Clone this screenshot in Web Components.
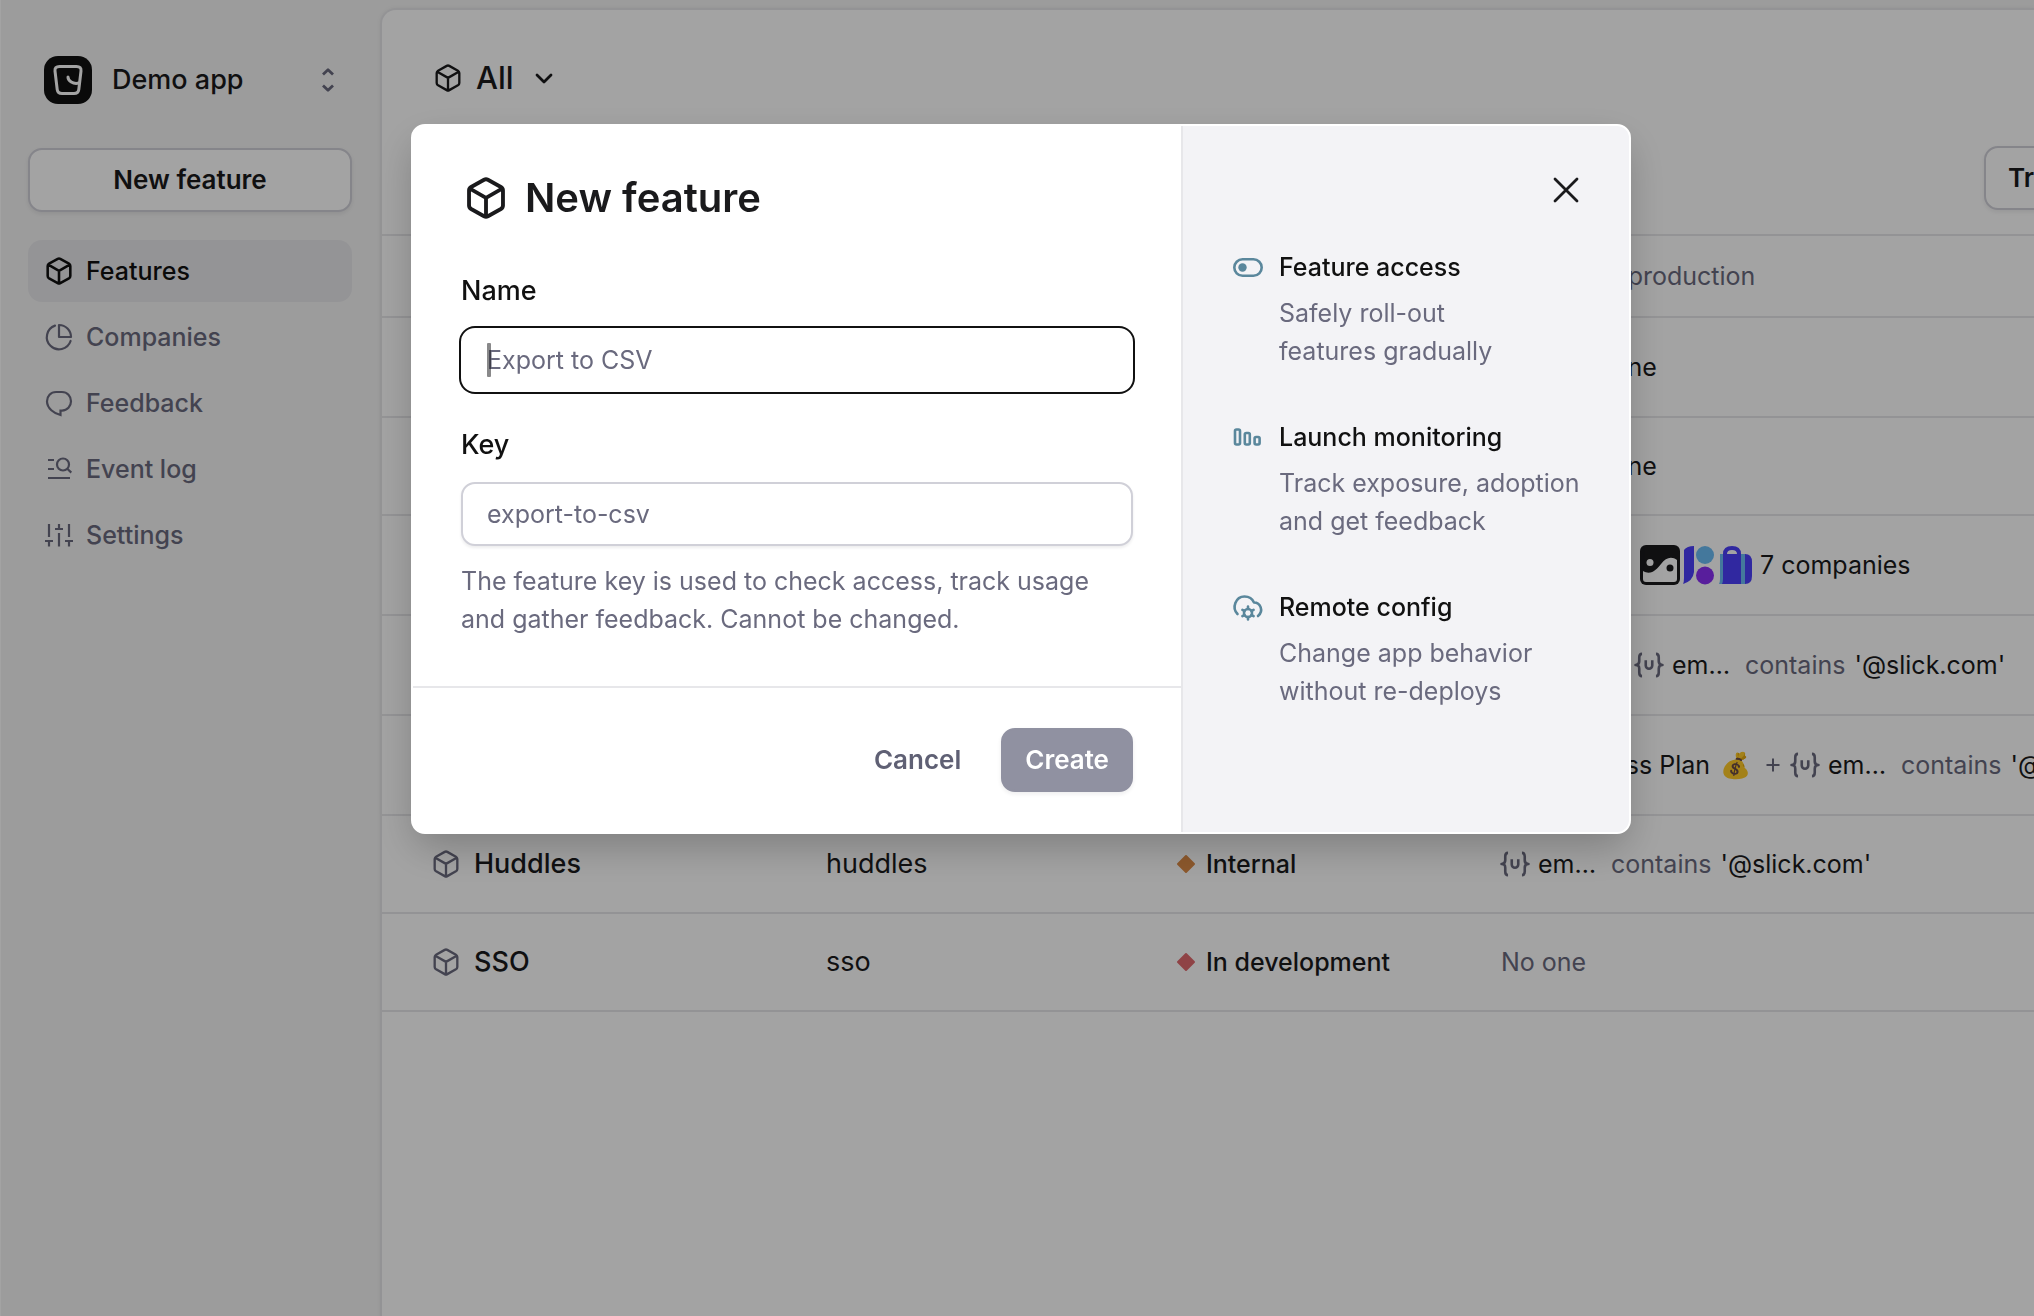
<!DOCTYPE html>
<html lang="en">
<head>
<meta charset="utf-8">
<title>Features</title>
<style>
  :root {
    --ink: #1a1a1c;
    --muted: #6a6a7e;
    --line: #e7e7ea;
    --field-line: #d0d0d8;
    --accent: #5a879c;
    --radius: 14px;
  }
  html, body { margin: 0; height: 100%; }
  body {
    overflow: hidden;
    background: #f4f4f4;
    color: var(--ink);
    font: 400 25px/38px Inter, "Liberation Sans", sans-serif;
  }
</style>
</head>
<body>
<app-shell>
  <app-sidebar slot="sidebar"></app-sidebar>
  <feature-list slot="main"></feature-list>
  <new-feature-modal slot="overlay"></new-feature-modal>
</app-shell>

<script>
const define = (name, html, setup) => {
  const template = document.createElement('template');
  template.innerHTML = '<style>*{box-sizing:border-box}button,input{font:inherit;color:inherit;margin:0}</style>' + html;
  customElements.define(name, class extends HTMLElement {
    constructor() {
      super();
      this.attachShadow({ mode: 'open' });
    }
    connectedCallback() {
      if (this.shadowRoot.childNodes.length) return;
      this.shadowRoot.append(template.content.cloneNode(true));
      if (setup) setup(this, this.shadowRoot);
    }
  });
};

const ICONS = {
  cube: ['0 0 24 24', '<path d="M10.9 1.6Q12 1 13.1 1.6L20.5 5.7Q21.7 6.4 21.7 7.7V16.3Q21.7 17.6 20.5 18.3L13.1 22.4Q12 23 10.9 22.4L3.5 18.3Q2.3 17.6 2.3 16.3V7.7Q2.3 6.4 3.5 5.7ZM2.8 6.6L12 11.9L21.2 6.6M12 11.9V22.6"/>'],
  pie: ['0 0 28 28', '<path d="M14 2V14H26A12 12 0 0 0 14 2ZM25.6 18A12.2 12.2 0 1 1 10 2.6"/>'],
  bubble: ['0 0 28 28', '<path d="M11 3H17C22.3 3 26 7.2 26 12.3S22.3 21.6 17 21.6H15.5V26C9 24.3 2 19.5 2 12.3C2 7.2 5.7 3 11 3Z" stroke-linejoin="miter"/>'],
  log: ['0 0 28 28', '<path d="M3 5H9M3 14H9M3 23H25M22.3 13.8L26.3 17.6" stroke-linecap="butt"/><circle cx="18" cy="9.5" r="6"/>'],
  sliders: ['0 0 28 28', '<path d="M4 3V16M0 20H8M4 20V25.5M14 3V8M10 8H18M14 12V25.5M24 3V16M20 20H28M24 20V25.5" stroke-linecap="butt"/>'],
  updown: ['0 0 16 28', '<path d="M3 8.5L8 3.7L13 8.5M3 19.5L8 24.3L13 19.5" stroke-linecap="butt"/>'],
  down: ['0 0 20 20', '<path d="M3 7L10 14L17 7"/>'],
  close: ['0 0 32 32', '<path d="M5 5L27 27M27 5L5 27"/>'],
  toggle: ['0 0 30 28', '<rect x="1.3" y="6.3" width="27.4" height="16.5" rx="8.25"/><circle cx="9.5" cy="14.5" r="4.2" fill="currentColor" stroke="none"/>'],
  bars: ['0 0 30 28', '<rect x="2" y="6.5" width="5" height="15" rx="1.5"/><rect x="11.8" y="10" width="5" height="11.5" rx="1.5"/><rect x="21.6" y="14" width="5" height="7.5" rx="1.5"/>'],
  cloud: ['0 0 30 28', '<path d="M4.500 21C-1.500 15 2.500 3.500 11.500 3.500C16 3.500 19.500 6 21 9.500C27.500 9.500 31 18 25 23"/><circle cx="15" cy="20" r="4"/><path d="M15 13.500V16M15 24V26.500M9.400 16.800L11.500 18M18.500 22L20.600 23.200M9.400 23.200L11.500 22M18.500 18L20.600 16.800"/>'],
  user: ['0 0 30 28', '<path d="M7.5 2C4.5 2 4.5 4 4.5 6V10C4.5 12.5 3.5 14 .5 14C3.5 14 4.5 15.5 4.5 18V22C4.5 24 4.5 26 7.5 26M22.5 2C25.5 2 25.5 4 25.5 6V10C25.5 12.5 26.5 14 29.5 14C26.5 14 25.5 15.5 25.5 18V22C25.5 24 25.5 26 22.5 26M11.5 9V14.5A3.5 3.5 0 0 0 18.5 14.5V9" stroke-linecap="butt"/>'],
  diamond: ['0 0 20 20', '<path d="M10 2L18 10L10 18L2 10Z" fill="currentColor"/>'],
  plus: ['0 0 16 28', '<path d="M1.500 14H14.500M8 7.500V20.500" stroke-linecap="butt"/>']
};
define('ui-icon', '<style>:host{display:block;flex:none}svg{display:block;overflow:visible;fill:none;stroke:currentColor;stroke-linecap:round;stroke-linejoin:round}</style>', (host, root) => {
  const [box, body] = ICONS[host.getAttribute('name')];
  const h = +(host.getAttribute('size') || 28);
  const [, , bw, bh] = box.split(' ').map(Number);
  root.innerHTML += `<svg viewBox="${box}" width="${Math.round(h * bw / bh)}" height="${h}" stroke-width="${host.getAttribute('weight') || 2}" aria-hidden="true">${body}</svg>`;
});

define('ui-button', `
  <style>
    :host { display: block; }
    button {
      width: 100%; height: 64px; padding: 0 22px; cursor: pointer; white-space: nowrap;
      font-size: 26px; font-weight: 600;
      border: 2px solid var(--field-line); border-radius: var(--radius);
      background: #fff; box-shadow: 0 2px 4px rgba(20, 20, 40, .08);
    }
    :host([kind=primary]) button { background: #9091a1; border-color: #9091a1; color: #fff; }
    :host([kind=plain]) button { background: none; border-color: transparent; box-shadow: none; color: #5f6074; }
  </style>
  <button type="button"><slot></slot></button>`);

define('app-shell', `
  <style>
    :host { display: grid; grid-template-columns: 380px minmax(0, 1fr); height: 100vh; overflow: hidden; box-shadow: inset 1px 0 #fff; }
  </style>
  <slot name="sidebar"></slot>
  <slot name="main"></slot>
  <slot name="overlay"></slot>`);

define('nav-item', `
  <style>
    a {
      display: flex; align-items: center; gap: 13px; height: 62px; padding: 0 17px;
      border-radius: var(--radius); color: var(--muted); font-weight: 500; text-decoration: none;
    }
    :host { display: block; }
    :host([current]) a { background: #e8e8eb; color: #111; }
  </style>
  <a href="#"><span><slot></slot></span></a>`, (host, root) => {
  const icon = document.createElement('ui-icon');
  icon.setAttribute('name', host.getAttribute('icon'));
  icon.setAttribute('weight', '2.2');
  root.querySelector('a').prepend(icon);
});

define('app-sidebar', `
  <style>
    :host { display: flex; flex-direction: column; gap: 28px; padding: 56px 28px 0; min-width: 0; height: 100vh; }
    .account {
      display: flex; align-items: center; gap: 20px; padding: 0 16px; margin-bottom: 16px;
      border: 0; background: none; font-size: 27px; font-weight: 500; text-align: left; height: 48px;
    }
    .account span { flex: 1; }
    .account ui-icon { color: var(--muted); }
    nav { display: flex; flex-direction: column; gap: 4px; }
    .footer { height: 62px; flex: none; margin: auto 0 -58px; border-radius: var(--radius); background: #e8e8eb; }
  </style>
  <button class="account" type="button">
    <svg width="48" height="48" viewBox="0 0 48 48" aria-hidden="true">
      <rect width="48" height="48" rx="14" fill="#111"/>
      <path d="M15.5 10.5H32.5Q37.5 10.5 37 15L34.8 33.500Q34.300 37.500 30 37.500H18Q13.700 37.500 13.200 33.500L11 15Q10.500 10.500 15.500 10.500Z" fill="none" stroke="#fff" stroke-width="3"/>
      <path d="M24 21C24 25 29 28.500 35 27" fill="none" stroke="#fff" stroke-width="3" stroke-linecap="round"/>
    </svg>
    <span>Demo app</span>
    <ui-icon name="updown" weight="2.8"></ui-icon>
  </button>
  <ui-button>New feature</ui-button>
  <nav>
    <nav-item icon="cube" current>Features</nav-item>
    <nav-item icon="pie">Companies</nav-item>
    <nav-item icon="bubble">Feedback</nav-item>
    <nav-item icon="log">Event log</nav-item>
    <nav-item icon="sliders">Settings</nav-item>
  </nav>
  <div class="footer"></div>`);

define('user-rule', `
  <style>
    :host { display: flex; align-items: center; gap: 9px; }
    ui-icon, .op { color: var(--muted); }
    .attr { width: 64px; }
  </style>
  <ui-icon name="user" size="26" weight="2.8"></ui-icon>
  <span class="attr">em…</span><span class="op">contains</span><span>'@slick.com'</span>`);

define('stage-label', `
  <style>
    :host { display: flex; align-items: center; gap: 10px; font-weight: 500; }
    ui-icon { color: var(--stage); }
  </style>
  <ui-icon name="diamond" size="20"></ui-icon><span><slot></slot></span>`);

define('company-logos', `
  <style>:host { display: flex; align-items: center; gap: 3px; padding-left: 5px; } svg { display: block; }</style>
  <svg width="40" height="40" viewBox="0 0 40 40" aria-hidden="true">
    <rect width="40" height="40" rx="6" fill="#1a1a1c"/>
    <path d="M3 26C11 31 17 24 21 19C26 12 32 11 37 15V34Q37 37 34 37H6Q3 37 3 34Z" fill="#fff"/>
    <circle cx="10" cy="17.5" r="3.5" fill="#fff"/><circle cx="30" cy="23" r="3.5" fill="#1a1a1c"/>
  </svg>
  <svg width="33" height="40" viewBox="0 0 33 40" aria-hidden="true">
    <path d="M1 5Q4 1 11 1V27Q10 36 0 39Q1 37 1 33Z" fill="#4b3ffb"/>
    <circle cx="22" cy="10" r="9" fill="#6bbcf5"/><circle cx="22" cy="30.5" r="9" fill="#8a2ff5"/>
  </svg>
  <svg width="33" height="40" viewBox="0 0 33 40" aria-hidden="true">
    <path d="M1 9H27V39H0Q1 37 1 34Z" fill="#6bbcf5"/>
    <path d="M4 9H22V39H3Q4 37 4 34ZM26 9Q33 9 33 17V31Q33 39 26 39Z" fill="#4b3ffb"/>
    <path d="M6 12V9Q6 3 13 3T20 9V12" fill="none" stroke="#4b3ffb" stroke-width="4"/>
  </svg>`);

define('feature-list', `
  <style>
    :host {
      display: block; min-width: 0; margin-top: 8px; overflow: hidden; background: #fff;
      border: 2px solid var(--line); border-width: 2px 0 0 2px; border-radius: 16px 0 0 0;
      box-shadow: 0 0 4px rgba(0, 0, 0, .06);
    }
    header { display: flex; align-items: center; height: 136px; padding-left: 52px; }
    .view { display: flex; align-items: center; gap: 14px; padding: 0; border: 0; background: none; font-size: 31px; font-weight: 500; }
    .view ui-icon:last-child { margin-left: 6px; }
    .tools { display: flex; justify-content: flex-end; padding-bottom: 24px; border-bottom: 2px solid var(--line); }
    .tools ui-button { flex: none; width: 162px; margin-right: -112px; }
    table { width: 100%; table-layout: fixed; border-collapse: separate; border-spacing: 0; }
    th, td { height: 100px; padding: 0 0 0 33px; border-bottom: 2px solid var(--line); text-align: left; white-space: nowrap; overflow: hidden; }
    th { height: 82px; color: var(--muted); font-weight: 400; }
    th:first-child, td:first-child { padding-left: 50px; }
    .short td { height: 98px; }
    .c1 { width: 411px; } .c2 { width: 350px; } .c3 { width: 325px; }
    .flex { display: flex; align-items: center; gap: 8px; }
    .name { gap: 14px; font-size: 27px; font-weight: 500; }
    .name ui-icon, .plus { color: var(--muted); }
    .key { font-size: 27px; }
    .tail { display: inline-flex; width: 126px; }
    .everyone { padding-left: 45px; }
    .env { padding-left: 5px; }
    .plan { gap: 10px; padding-left: 45px; }
    .plus { margin-left: 4px; }
    .none { color: var(--muted); }
  </style>
  <header>
    <button class="view" type="button"><ui-icon name="cube" weight="2"></ui-icon><span>All</span><ui-icon name="down" size="20" weight="2.8"></ui-icon></button>
  </header>
  <div class="tools"><ui-button>Tree view</ui-button></div>
  <table>
    <colgroup><col class="c1"><col class="c2"><col class="c3"><col></colgroup>
    <thead><tr><th></th><th></th><th></th><th><div class="env">Access in production</div></th></tr></thead>
    <tbody>
      <tr><td></td><td></td><td></td><td><div class="everyone">Everyone</div></td></tr>
      <tr class="short"><td></td><td></td><td></td><td><div class="everyone">Everyone</div></td></tr>
      <tr><td></td><td></td><td></td><td><div class="flex"><span class="tail"></span><company-logos></company-logos><span>7 companies</span></div></td></tr>
      <tr><td></td><td></td><td></td><td><div class="flex"><span class="tail"></span><user-rule></user-rule></div></td></tr>
      <tr><td></td><td></td><td></td><td><div class="flex plan"><span>Business Plan</span><span>💰</span><ui-icon class="plus" name="plus"></ui-icon><user-rule></user-rule></div></td></tr>
      <tr class="short">
        <td><div class="flex name"><ui-icon name="cube"></ui-icon><span>Huddles</span></div></td>
        <td class="key">huddles</td>
        <td><stage-label style="--stage:#dc8b46">Internal</stage-label></td>
        <td><user-rule></user-rule></td>
      </tr>
      <tr class="short">
        <td><div class="flex name"><ui-icon name="cube"></ui-icon><span>SSO</span></div></td>
        <td class="key">sso</td>
        <td><stage-label style="--stage:#e06a6e">In development</stage-label></td>
        <td class="none">No one</td>
      </tr>
    </tbody>
  </table>`);

define('text-field', `
  <style>
    :host { display: flex; flex-direction: column; gap: 18px; }
    label { font-size: 27px; font-weight: 500; color: #111; }
    .box { position: relative; display: flex; }
    input {
      width: 100%; height: 64px; padding: 0 24px; outline: 0; background: #fff;
      border: 2px solid var(--field-line); border-radius: var(--radius);
      box-shadow: 0 2px 3px rgba(20, 20, 40, .08);
    }
    input::placeholder { color: var(--muted); opacity: 1; }
    .caret { display: none; position: absolute; left: 26px; top: 15px; width: 4px; height: 34px; border-radius: 1px; background: rgba(20, 20, 22, .5); }
    :host([active]) input { border-color: #fff; box-shadow: 0 0 0 2px #111; }
    :host([active]) .caret { display: block; }
  </style>
  <label for="field"><slot></slot></label>
  <div class="box"><input id="field" type="text"><span class="caret"></span></div>`, (host, root) => {
  root.querySelector('input').placeholder = host.getAttribute('hint');
});

define('benefit-item', `
  <style>
    :host { display: flex; gap: 16px; }
    ui-icon { padding-top: 5px; color: var(--accent); }
    h3 { margin: 0 0 8px; font-size: 25px; font-weight: 500; color: #111; }
    p { margin: 0; color: var(--muted); white-space: nowrap; }
  </style>
  <div><h3><slot name="title"></slot></h3><p><slot></slot></p></div>`, (host, root) => {
  const icon = document.createElement('ui-icon');
  icon.setAttribute('name', host.getAttribute('icon'));
  icon.setAttribute('weight', '2.6');
  root.querySelector('div').before(icon);
});

define('new-feature-modal', `
  <style>
    :host {
      position: fixed; inset: 0; display: flex; justify-content: center; align-items: flex-start;
      padding: 124px 0 0 8px; background: rgba(0, 0, 0, .36);
    }
    .card {
      display: flex; width: 100%; max-width: 1220px; background: #fff;
      border: 2px solid #fff; border-radius: var(--radius); overflow: hidden;
      box-shadow: 0 16px 40px -4px rgba(0, 0, 0, .24);
    }
    form { flex: 1; min-width: 0; }
    .body { padding: 48px; }
    h2 { display: flex; align-items: center; gap: 18px; margin: 0 0 50px; padding-left: 4px; font-size: 40px; line-height: 48px; font-weight: 600; }
    text-field + text-field { margin-top: 34px; }
    p { margin: 16px 0 0; color: var(--muted); }
    footer { display: flex; justify-content: flex-end; gap: 16px; padding: 40px 48px; border-top: 2px solid var(--line); }
    aside { flex: none; width: 448px; padding: 48px 47px 0 50px; background: #f3f3f6; border-left: 2px solid var(--line); }
    .close { display: block; margin: 0 0 42px auto; padding: 0; width: 32px; height: 32px; border: 0; background: none; cursor: pointer; }
    benefit-item + benefit-item { margin-top: 48px; }
  </style>
  <section class="card" role="dialog" aria-label="New feature">
    <form>
      <div class="body">
        <h2><ui-icon name="cube" size="42" weight="2.2"></ui-icon><span>New feature</span></h2>
        <text-field hint="Export to CSV" active>Name</text-field>
        <text-field hint="export-to-csv">Key</text-field>
        <p>The feature key is used to check access, track usage and gather feedback. Cannot be changed.</p>
      </div>
      <footer><ui-button kind="plain">Cancel</ui-button><ui-button kind="primary">Create</ui-button></footer>
    </form>
    <aside>
      <button class="close" type="button" aria-label="Close"><ui-icon name="close" size="32" weight="2.8"></ui-icon></button>
      <benefit-item icon="toggle"><span slot="title">Feature access</span>Safely roll-out<br>features gradually</benefit-item>
      <benefit-item icon="bars"><span slot="title">Launch monitoring</span>Track exposure, adoption<br>and get feedback</benefit-item>
      <benefit-item icon="cloud"><span slot="title">Remote config</span>Change app behavior<br>without re-deploys</benefit-item>
    </aside>
  </section>`);
</script>
</body>
</html>
